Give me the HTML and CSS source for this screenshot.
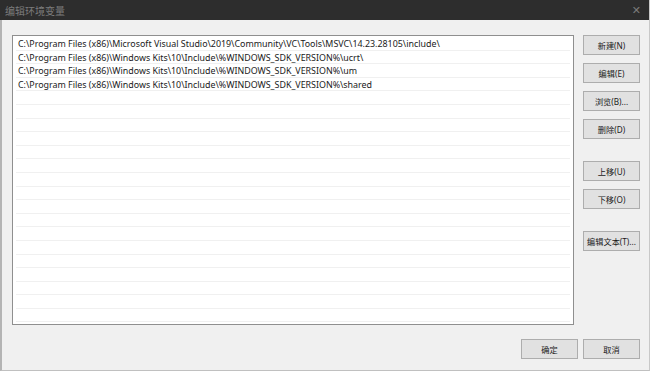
FILE: index.html
```html
<!DOCTYPE html>
<html>
<head>
<meta name="viewport" content="width=device-width, initial-scale=1">
<title>编辑环境变量</title>
<link rel="stylesheet" href="styles.css">
</head>
<body>

<div class="window">
  <div class="titlebar">
    <span class="title">编辑环境变量</span>
    <span class="close">&#x2715;</span>
  </div>

  <div class="content">
    <div class="main">
      <div class="list">
        <div class="row">C:\Program Files (x86)\Microsoft Visual Studio\2019\Community\VC\Tools\MSVC\14.23.28105\include\</div>
        <div class="row">C:\Program Files (x86)\Windows Kits\10\Include\%WINDOWS_SDK_VERSION%\ucrt\</div>
        <div class="row">C:\Program Files (x86)\Windows Kits\10\Include\%WINDOWS_SDK_VERSION%\um</div>
        <div class="row">C:\Program Files (x86)\Windows Kits\10\Include\%WINDOWS_SDK_VERSION%\shared</div>
        <div class="row"></div>
        <div class="row"></div>
        <div class="row"></div>
        <div class="row"></div>
        <div class="row"></div>
        <div class="row"></div>
        <div class="row"></div>
        <div class="row"></div>
        <div class="row"></div>
        <div class="row"></div>
        <div class="row"></div>
        <div class="row"></div>
        <div class="row"></div>
        <div class="row"></div>
        <div class="row"></div>
        <div class="row"></div>
        <div class="row"></div>
      </div>

      <div class="side">
        <div class="group">
          <button class="btn">新建(N)</button>
          <button class="btn">编辑(E)</button>
          <button class="btn">浏览(B)...</button>
          <button class="btn">删除(D)</button>
        </div>
        <div class="group">
          <button class="btn">上移(U)</button>
          <button class="btn">下移(O)</button>
        </div>
        <div class="group">
          <button class="btn">编辑文本(T)...</button>
        </div>
      </div>
    </div>

    <div class="footer">
      <button class="btn">确定</button>
      <button class="btn">取消</button>
    </div>
  </div>
</div>

</body>
</html>
```

FILE: styles.css
```css
/* Windows style dialog */

body {
    margin: 0;
    background-color: #f0f0f0;
    font-family: "Noto Sans", "Noto Sans CJK SC", sans-serif;
}

.window {
    width: 650px;
    height: 371px;
    box-sizing: border-box;
    border-left: 2px solid #b4b4b4;
    border-right: 1px solid #c8c8c8;
    border-bottom: 1px solid #c0c0c0;
    background-color: #f0f0f0;
    display: flex;
    flex-direction: column;
}

.titlebar {
    height: 20px;
    background-color: #2d2d2d;
    display: flex;
    align-items: center;
    justify-content: space-between;
    padding: 0 8px 0 5px;
    margin-left: -2px;
}

.title {
    color: #7c7c7c;
    font-size: 10px;
}

.close {
    color: #7a7a7a;
    font-size: 11px;
    font-family: "DejaVu Sans", sans-serif;
}

.content {
    flex: 1;
    display: flex;
    flex-direction: column;
    padding: 15px 9px 0 10px;
}

.main {
    display: flex;
    gap: 9px;
}

.list {
    width: 562px;
    height: 290px;
    box-sizing: border-box;
    border: 1px solid #8f8f8f;
    background-color: #ffffff;
    padding: 1px 3px 0 3px;
    overflow: hidden;
}

.row {
    height: 13.6px;
    box-sizing: border-box;
    border-bottom: 1px solid #f0f0f0;
    font-size: 8.9px;
    line-height: 13px;
    color: #1a1a1a;
    padding-left: 2px;
    white-space: nowrap;
}

.side {
    display: flex;
    flex-direction: column;
    gap: 22px;
}

.group {
    display: flex;
    flex-direction: column;
    gap: 8px;
}

.btn {
    width: 57px;
    height: 20px;
    margin: 0;
    padding: 0;
    border: 1px solid #adadad;
    background-color: #e1e1e1;
    color: #1a1a1a;
    font-family: "Noto Sans", "Noto Sans CJK SC", sans-serif;
    font-size: 8.2px;
}

.footer {
    display: flex;
    justify-content: flex-end;
    gap: 5px;
    padding-top: 14px;
}
```
